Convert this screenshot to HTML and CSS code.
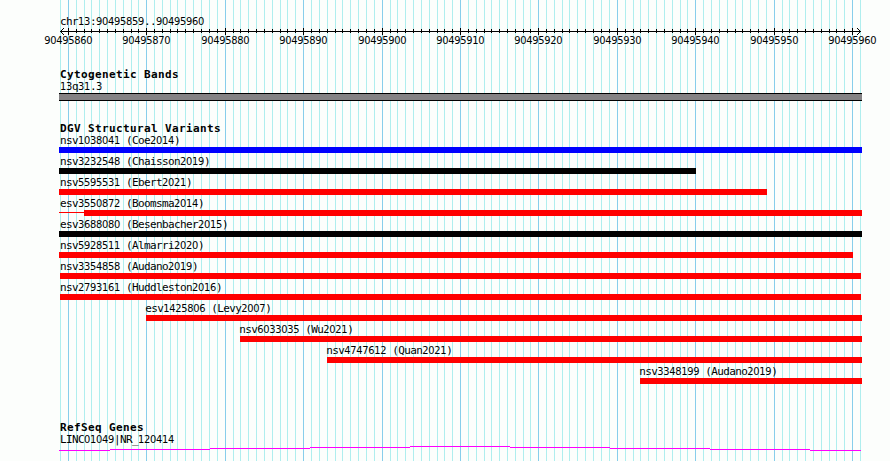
FILE: index.html
```html
<!DOCTYPE html>
<html lang="en">
<head>
  <meta charset="UTF-8">
  <title>chr13:90495859..90495960</title>
  <link rel="stylesheet" href="styles.css">
</head>
<body>
  <div class="browser">
    <svg class="grid" id="grid" width="890" height="461"></svg>

    <div class="panel">
      <div class="label region">chr13:90495859..90495960</div>
      <svg class="axis" id="axis" width="890" height="20"></svg>

      <div class="track cytoband">
        <h2>Cytogenetic Bands</h2>
        <div class="label">13q31.3</div>
        <div class="band"></div>
      </div>

      <div class="track variants">
        <h2>DGV Structural Variants</h2>
        <div id="variants"></div>
      </div>

      <div class="track genes">
        <h2>RefSeq Genes</h2>
        <div class="label">LINC01049|NR_120414</div>
        <svg class="gene" width="803" height="6">
          <path d="M0 4.5H51M51 3.5H151M151 2.5H251M251 1.5H351M351 .5H451M451 1.5H551M551 2.5H651M651 3.5H751M751 4.5H802"/>
        </svg>
      </div>
    </div>
  </div>

  <script src="tracks.js"></script>
</body>
</html>
```

FILE: styles.css
```css
body {
  margin: 0;
  background: #fcfefc;
  color: #000;
  font-family: "DejaVu Sans Mono", monospace;
}

.browser {
  position: relative;
  width: 890px;
  height: 461px;
  overflow: hidden;
}

.grid {
  position: absolute;
  top: 0;
  left: 0;
}

.grid path,
.axis path,
.gene path {
  shape-rendering: crispEdges;
}

.grid .minor {
  stroke: #afeeee;
}

.grid .major {
  stroke: #87ceeb;
}

.panel {
  position: relative;
  width: 803px;
  padding: 16px 0 0 59px;
}

h2 {
  margin: 0;
  height: 12px;
  padding-left: 1px;
  font-size: 11px;
  line-height: 12px;
  letter-spacing: 0.38px;
  white-space: pre;
}

.label {
  height: 12px;
  padding-left: 1px;
  font-size: 11px;
  line-height: 12px;
  letter-spacing: -0.62px;
  white-space: pre;
}

/* digits without the slashed zero, same 6px advance */
.num {
  font-family: "DejaVu Sans Condensed", "DejaVu Sans", sans-serif;
  font-stretch: condensed;
  font-size: 11px;
  letter-spacing: -0.3px;
}

.axis {
  display: block;
  margin-left: -59px;
}

.axis path {
  stroke: #000;
  fill: none;
}

.axis text {
  text-anchor: middle;
}

.cytoband {
  padding-top: 21px;
}

.band {
  height: 6px;
  background: #848284;
  border-top: 1px solid #000;
  border-bottom: 1px solid #000;
}

.variants {
  padding-top: 22px;
}

.row {
  height: 21px;
}

.bar {
  height: 6px;
}

.blue {
  background: #00f;
}

.black {
  background: #000;
}

.red {
  background: #f00;
}

.with-line {
  display: flex;
  align-items: flex-start;
}

.line {
  height: 1px;
  margin-top: 2px;
  background: #f00;
}

.genes {
  padding-top: 35px;
}

.gene {
  display: block;
}

.gene path {
  stroke: #f0f;
}
```

FILE: tracks.js
```js
var START = 59;

// x of every base in the window, one list per ten bases
var ticks = [
  60,
  68, 76, 84, 91, 99, 107, 115, 123, 131, 138,
  146, 154, 162, 170, 177, 185, 193, 201, 209, 217,
  225, 233, 240, 248, 256, 264, 272, 280, 287, 295,
  303, 311, 319, 327, 335, 342, 350, 358, 366, 374,
  382, 390, 397, 405, 413, 421, 429, 437, 444, 452,
  460, 468, 476, 484, 491, 499, 507, 515, 523, 530,
  538, 546, 554, 562, 569, 577, 585, 593, 601, 609,
  617, 625, 633, 640, 648, 656, 664, 672, 680, 687,
  695, 703, 711, 719, 727, 735, 742, 750, 758, 766,
  774, 782, 789, 797, 805, 813, 821, 829, 836, 844,
  852, 860
];

var variants = [
  { name: "nsv1038041 (Coe2014)", from: 59, to: 862, color: "blue" },
  { name: "nsv3232548 (Chaisson2019)", from: 59, to: 696, color: "black" },
  { name: "nsv5595531 (Ebert2021)", from: 59, to: 767, color: "red" },
  { name: "esv3550872 (Boomsma2014)", from: 59, thick: 84, to: 862, color: "red" },
  { name: "esv3688080 (Besenbacher2015)", from: 59, to: 862, color: "black" },
  { name: "nsv5928511 (Almarri2020)", from: 59, to: 853, color: "red" },
  { name: "nsv3354858 (Audano2019)", from: 60, to: 861, color: "red" },
  { name: "nsv2793161 (Huddleston2016)", from: 60, to: 861, color: "red" },
  { name: "esv1425806 (Levy2007)", from: 146, to: 862, color: "red" },
  { name: "nsv6033035 (Wu2021)", from: 240, to: 862, color: "red" },
  { name: "nsv4747612 (Quan2021)", from: 327, to: 862, color: "red" },
  { name: "nsv3348199 (Audano2019)", from: 640, to: 862, color: "red" }
];

function drawGrid() {
  var minor = "", major = "", marks = "", labels = "";
  ticks.forEach(function (x, i) {
    var c = x + 0.5;
    if (i % 10 === 1) {
      major += "M" + c + " 0V461";
      marks += "M" + c + " 0V7";
      labels += '<text class="num" x="' + (x + 0.3) + '" y="16">' + (90495859 + i) + "</text>";
    } else {
      minor += "M" + c + " 0V461";
      if (i > 0 && i < ticks.length - 1) marks += "M" + c + " 1V5";
    }
  });
  document.getElementById("grid").innerHTML =
    '<path class="minor" d="' + minor + '"/><path class="major" d="' + major + '"/>';
  document.getElementById("axis").innerHTML =
    '<path d="' + marks + 'M60 3.5H861M64 0L60.5 3.5L64 7M857 0L860.5 3.5L857 7"/>' + labels;
}

function drawVariants() {
  document.getElementById("variants").innerHTML = variants.map(function (v) {
    var textLeft = Math.max(v.from - 1.7, 59) - START;
    var thick = v.thick || v.from;
    var bar = '<div class="bar ' + v.color + '" style="width:' + (v.to - thick) + 'px"></div>';
    if (v.thick) {
      bar = '<div class="with-line"><div class="line" style="width:' + (v.thick - v.from) + 'px"></div>' + bar + "</div>";
    }
    return '<div class="row"><div class="label" style="margin-left:' + textLeft + 'px">' + v.name +
      '</div><div style="margin-left:' + (v.from - START) + 'px">' + bar + "</div></div>";
  }).join("");
}

drawGrid();
drawVariants();

document.querySelectorAll(".label").forEach(function (el) {
  el.innerHTML = el.textContent.replace(/\d+/g, '<span class="num">$&</span>');
});
```
